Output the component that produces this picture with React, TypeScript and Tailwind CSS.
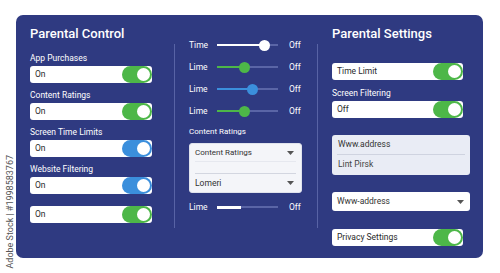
import React from "react";

const GREEN = "bg-[#4db748]";
const BLUE = "bg-[#3b8fdc]";

const Toggle = ({ color }: { color: string }) => (
  <div className={`flex h-full w-[30px] shrink-0 items-center justify-end rounded-full ${color}`}>
    <div className="mr-[2px] h-[13px] w-[13px] rounded-full bg-white" />
  </div>
);

const ToggleInput = ({ text, color, width = "w-full" }: { text: string; color: string; width?: string }) => (
  <div className={`flex h-[17px] ${width} items-center rounded-[3px] bg-white`}>
    <span className="flex-1 pl-[5px] text-[8.5px] text-[#2a2a2a]">{text}</span>
    <Toggle color={color} />
  </div>
);

const Caret = () => (
  <svg width="7" height="4" viewBox="0 0 7 4" className="shrink-0">
    <path d="M0 0 L7 0 L3.5 4 Z" fill="#555" />
  </svg>
);

const Slider = ({ label, pos, fill, knob, bar = false }: { label: string; pos: number; fill: string; knob: string; bar?: boolean }) => (
  <div className="flex h-[22px] items-center">
    <span className="w-[29px] pl-[1px] text-[8.5px] text-white">{label}</span>
    <div className="relative h-[2px] w-[61px] bg-[#5a65a6]">
      <div className={`absolute left-0 ${bar ? "top-[-0.5px] h-[3px]" : "top-0 h-[2px]"} ${fill}`} style={{ width: pos }} />
      {!bar && (
        <div
          className={`absolute top-[-4.5px] h-[11px] w-[11px] rounded-full ${knob}`}
          style={{ left: pos - 5.5 }}
        />
      )}
    </div>
    <span className="ml-[11px] text-[8.5px] text-white">Off</span>
  </div>
);

const Divider = ({ ml }: { ml: string }) => (
  <div className={`mt-[20px] h-[184px] w-px shrink-0 self-start bg-[#5863a5] ${ml}`} />
);

export default function App() {
  const leftRows = [
    { label: "App Purchases", color: GREEN },
    { label: "Content Ratings", color: GREEN },
    { label: "Screen Time Limits", color: BLUE },
    { label: "Website Filtering", color: BLUE },
  ];

  return (
    <div className="relative h-[273px] w-[500px] overflow-hidden bg-white font-['Roboto',sans-serif]">
      <div className="absolute left-[5px] top-[155px] rotate-180 text-[9px] leading-[10px] text-[#555] [writing-mode:vertical-rl]">
        Adobe Stock | #1998583767
      </div>

      <div className="ml-[16px] mt-[15px] flex h-[243px] w-[467px] rounded-[7px] bg-[#2f3a81] px-[14px] pt-[9px]">
        {/* left column */}
        <div className="flex w-[122px] shrink-0 flex-col">
          <h1 className="text-[13px] font-medium leading-[20px] text-white">Parental Control</h1>
          {leftRows.map((row, i) => (
            <div key={row.label} className={i === 0 ? "mt-[8px]" : "mt-[6px]"}>
              <div className="text-[8.5px] leading-[12px] text-white">{row.label}</div>
              <div className="mt-[2px]">
                <ToggleInput text="On" color={row.color} />
              </div>
            </div>
          ))}
          <div className="mt-[12px]">
            <ToggleInput text="On" color={GREEN} />
          </div>
        </div>

        <Divider ml="ml-[22px]" />

        {/* middle column */}
        <div className="ml-[13px] flex w-[114px] shrink-0 flex-col">
          <div className="mt-[10px]">
            <Slider label="Time" pos={47} fill="bg-white" knob="bg-white" />
            <Slider label="Lime" pos={27} fill={GREEN} knob={GREEN} />
            <Slider label="Lime" pos={35} fill={BLUE} knob={BLUE} />
            <Slider label="Lime" pos={27} fill={GREEN} knob={GREEN} />
          </div>
          <div className="mt-[3.5px] pl-[1px] text-[8px] leading-[12px] text-white">Content Ratings</div>
          <div className="ml-[1px] mt-[5.5px] flex h-[50px] flex-col rounded-[3px] border border-[#dfe2ec] bg-[#f4f5f9] px-[5px]">
            <div className="flex h-[18px] shrink-0 items-center justify-between border-b border-[#e6e8ef] pr-[2px]">
              <span className="text-[8px] text-[#333]">Content Ratings</span>
              <Caret />
            </div>
            <div className="h-[12px] shrink-0 border-b border-[#d3d6e0]" />
            <div className="flex h-[18px] shrink-0 items-center justify-between pr-[2px]">
              <span className="text-[8.5px] text-[#333]">Lomeri</span>
              <Caret />
            </div>
          </div>
          <div className="mt-[3px]">
            <Slider label="Lime" pos={24} fill="bg-white" knob="bg-white" bar />
          </div>
        </div>

        <Divider ml="ml-[15px]" />

        {/* right column */}
        <div className="ml-[14px] flex w-[138px] shrink-0 flex-col">
          <h2 className="text-[13px] font-medium leading-[20px] text-white">Parental Settings</h2>
          <div className="mt-[19px]">
            <ToggleInput text="Time Limit" color={GREEN} width="w-[131px]" />
          </div>
          <div className="mt-[7px] text-[8.5px] leading-[12px] text-white">Screen Filtering</div>
          <div className="mt-[2px]">
            <ToggleInput text="Off" color={GREEN} width="w-[131px]" />
          </div>
          <div className="mt-[17px] flex h-[40px] flex-col rounded-[3px] bg-[#e9ecf5] px-[5px]">
            <div className="flex h-[20px] shrink-0 items-center border-b border-[#cfd3e0] pl-[1px] text-[8.5px] text-[#333]">
              Www.address
            </div>
            <div className="flex h-[19px] items-center pl-[1px] text-[8.5px] text-[#444]">Lint Pirsk</div>
          </div>
          <div className="mt-[17px] flex h-[19px] items-center justify-between rounded-[3px] bg-white pl-[5px] pr-[6px]">
            <span className="text-[8.5px] text-[#333]">Www‑address</span>
            <Caret />
          </div>
          <div className="mt-[18px]">
            <ToggleInput text="Privacy Settings" color={GREEN} width="w-[131px]" />
          </div>
        </div>
      </div>
    </div>
  );
}
